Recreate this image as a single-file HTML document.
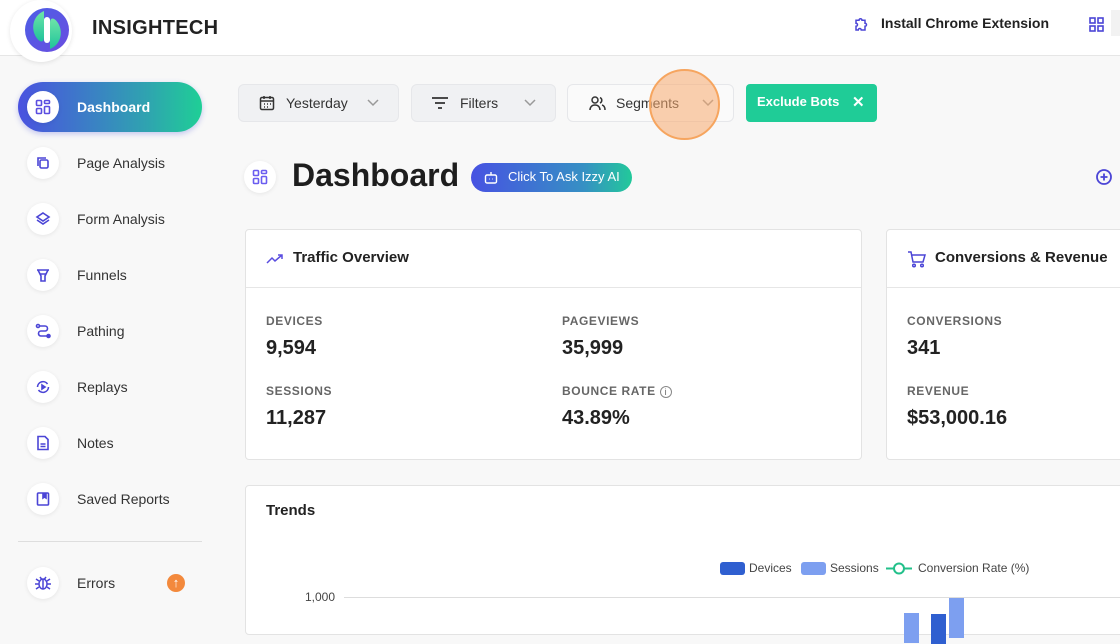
<!DOCTYPE html>
<html><head><meta charset="utf-8"><style>
*{box-sizing:border-box;margin:0;padding:0}
body{width:1120px;height:621px;overflow:hidden;background:#f8f8f8;font-family:"Liberation Sans",sans-serif;color:#222;position:relative}
.abs{position:absolute}
.hdr{left:0;top:0;width:1120px;height:56px;background:#fff;border-bottom:1px solid #e6e6e6}
.ic{position:absolute;width:32px;height:32px;border-radius:50%;background:#fff;box-shadow:0 1px 4px rgba(0,0,0,.08);display:flex;align-items:center;justify-content:center}
.nav{position:absolute;left:77px;font-size:14px;color:#333}
.btn{position:absolute;top:84px;height:38px;border-radius:6px;background:#f0f1f3;border:1px solid #e6e7ea;font-size:14px;color:#333;display:flex;align-items:center}
.chev{position:absolute;top:14px}
.card{position:absolute;background:#fff;border:1px solid #e3e3e3;border-radius:4px}
.lbl{position:absolute;font-size:12px;font-weight:bold;color:#666;letter-spacing:.6px}
.val{position:absolute;font-size:20px;font-weight:bold;color:#222}
</style></head><body>
<div class="abs hdr"></div>
<div class="abs" style="left:10px;top:0;width:62px;height:62px;border-radius:50%;background:#fff;box-shadow:0 1px 5px rgba(0,0,0,.1)"></div>
<svg class="abs" style="left:24px;top:7px" width="46" height="46" viewBox="0 0 46 46"><defs><linearGradient id="lg" x1="0" y1="0" x2="1" y2="1"><stop offset="0" stop-color="#4c5fe6"/><stop offset="1" stop-color="#6a4de0"/></linearGradient><linearGradient id="lg2" x1="0" y1="0" x2="0" y2="1"><stop offset="0" stop-color="#6ee5a8"/><stop offset="1" stop-color="#1fc39a"/></linearGradient></defs><circle cx="23" cy="23" r="22" fill="url(#lg)"/><path d="M20 4C10 8 6 20 12 30C16 36 20 36 20 30Z" fill="url(#lg2)"/><path d="M26 42C36 38 40 26 34 16C30 10 26 10 26 16Z" fill="url(#lg2)"/><rect x="20" y="10" width="6" height="26" rx="3" fill="#fff"/></svg>
<div class="abs" style="left:92px;top:17px;font-size:20px;font-weight:bold;color:#222;letter-spacing:.3px">INSIGHTECH</div>
<svg class="abs" style="left:853px;top:15px" width="18" height="18" viewBox="0 0 24 24" fill="none" stroke="#4b45d6" stroke-width="2"><path d="M4 7h4a2 2 0 1 1 4 0h4v4a2 2 0 1 1 0 4v5h-5a2 2 0 1 0-4 0H4v-5a2 2 0 1 0 0-4z"/></svg>
<div class="abs" style="left:881px;top:15px;font-size:14px;font-weight:bold;color:#222">Install Chrome Extension</div>
<svg class="abs" style="left:1089px;top:17px" width="15" height="15" viewBox="0 0 15 15" fill="none" stroke="#4b45d6" stroke-width="1.6"><rect x="1" y="1" width="5" height="5"/><rect x="9" y="1" width="5" height="5"/><rect x="1" y="9" width="5" height="5"/><rect x="9" y="9" width="5" height="5"/></svg>
<div class="abs" style="left:1111px;top:10px;width:9px;height:26px;background:#f2f2f2"></div>

<div class="abs" style="left:18px;top:82px;width:184px;height:50px;border-radius:25px;background:linear-gradient(90deg,#4a52e0,#2fa3b0 70%,#1fcf96);box-shadow:0 2px 6px rgba(70,80,220,.3)"></div>
<div class="ic" style="left:27px;top:91px"><svg width="16" height="16" viewBox="0 0 16 16" fill="none" stroke="#5a4de0" stroke-width="1.6"><rect x="1.5" y="1.5" width="5" height="5" rx="1"/><rect x="9.5" y="1.5" width="5" height="3" rx="1"/><rect x="9.5" y="7.5" width="5" height="7" rx="1"/><rect x="1.5" y="9.5" width="5" height="5" rx="1"/></svg></div>
<div class="abs" style="left:77px;top:99px;font-size:14px;font-weight:bold;color:#fff">Dashboard</div>

<div class="ic" style="left:27px;top:147px"><svg width="16" height="16" viewBox="0 0 16 16" fill="none" stroke="#4b45d6" stroke-width="1.6"><path d="M3 11V3h8"/><rect x="5" y="5" width="8" height="8" rx="1.5"/></svg></div><div class="nav" style="top:155px">Page Analysis</div>
<div class="ic" style="left:27px;top:203px"><svg width="16" height="16" viewBox="0 0 16 16" fill="none" stroke="#4b45d6" stroke-width="1.6"><path d="M8 2l6 4-6 4-6-4z"/><path d="M2 9l6 4 6-4"/></svg></div><div class="nav" style="top:211px">Form Analysis</div>
<div class="ic" style="left:27px;top:259px"><svg width="16" height="16" viewBox="0 0 16 16" fill="none" stroke="#4b45d6" stroke-width="1.6"><path d="M2 3h12M3 3l3 6v5h4V9l3-6M5 7h6"/></svg></div><div class="nav" style="top:267px">Funnels</div>
<div class="ic" style="left:27px;top:315px"><svg width="16" height="16" viewBox="0 0 16 16" fill="none" stroke="#4b45d6" stroke-width="1.6"><circle cx="3" cy="3" r="1.5"/><path d="M5 3h5a2.5 2.5 0 0 1 0 5H6a2.5 2.5 0 0 0 0 5h6"/><circle cx="13.5" cy="13" r="1.5" fill="#4b45d6"/></svg></div><div class="nav" style="top:323px">Pathing</div>
<div class="ic" style="left:27px;top:371px"><svg width="16" height="16" viewBox="0 0 16 16" fill="none" stroke="#4b45d6" stroke-width="1.6"><path d="M2.5 8a5.5 5.5 0 0 1 10-3M13.5 8a5.5 5.5 0 0 1-10 3"/><path d="M7 6l3 2-3 2z" fill="#4b45d6"/></svg></div><div class="nav" style="top:379px">Replays</div>
<div class="ic" style="left:27px;top:427px"><svg width="16" height="16" viewBox="0 0 16 16" fill="none" stroke="#4b45d6" stroke-width="1.6"><path d="M3 1.5h7l3 3v10H3z"/><path d="M5.5 9h5M5.5 11.5h5"/></svg></div><div class="nav" style="top:435px">Notes</div>
<div class="ic" style="left:27px;top:483px"><svg width="16" height="16" viewBox="0 0 16 16" fill="none" stroke="#4b45d6" stroke-width="1.6"><rect x="2.5" y="2" width="11" height="12" rx="1"/><path d="M8 2v5l1.5-1 1.5 1V2" fill="#4b45d6"/></svg></div><div class="nav" style="top:491px">Saved Reports</div>
<div class="abs" style="left:18px;top:541px;width:184px;height:1px;background:#dedede"></div>
<div class="ic" style="left:27px;top:567px"><svg width="18" height="18" viewBox="0 0 18 18" fill="none" stroke="#4b45d6" stroke-width="1.5"><ellipse cx="9" cy="10" rx="4" ry="5"/><path d="M9 5v10M1 10h4M13 10h4M2 5l3 2M16 5l-3 2M2 15l3-2M16 15l-3-2M6 3l1.5 2M12 3l-1.5 2"/></svg></div><div class="nav" style="top:575px">Errors</div>
<div class="abs" style="left:167px;top:574px;width:18px;height:18px;border-radius:50%;background:#f3893c;color:#fff;font-size:13px;font-weight:bold;text-align:center;line-height:18px">↑</div>

<div class="btn" style="left:238px;width:161px"><svg style="margin-left:20px" width="16" height="16" viewBox="0 0 16 16" fill="none" stroke="#333" stroke-width="1.5"><rect x="1.5" y="2.5" width="13" height="12" rx="1.5"/><path d="M1.5 6h13M5 1v3M11 1v3M5 9h1M8 9h1M11 9h1M5 12h1M8 12h1"/></svg><span style="margin-left:11px">Yesterday</span><svg class="chev" style="left:128px" width="12" height="8" viewBox="0 0 12 8" fill="none" stroke="#999" stroke-width="1.5"><path d="M1 1l5 5 5-5"/></svg></div>
<div class="btn" style="left:411px;width:145px"><svg style="margin-left:19px" width="18" height="14" viewBox="0 0 18 14" stroke="#333" stroke-width="1.8"><path d="M1 2h16M4 7h10M7 12h4"/></svg><span style="margin-left:11px">Filters</span><svg class="chev" style="left:112px" width="12" height="8" viewBox="0 0 12 8" fill="none" stroke="#999" stroke-width="1.5"><path d="M1 1l5 5 5-5"/></svg></div>
<div class="btn" style="left:567px;width:167px;background:#fafafa"><svg style="margin-left:21px" width="17" height="15" viewBox="0 0 17 15" fill="none" stroke="#333" stroke-width="1.5"><circle cx="6" cy="4" r="3"/><path d="M1 14c0-3 2-5 5-5s5 2 5 5M11 1.5a3 3 0 0 1 0 5.5M13 9c2 .5 3 2.5 3 5"/></svg><span style="margin-left:10px">Segments</span><svg class="chev" style="left:134px" width="12" height="8" viewBox="0 0 12 8" fill="none" stroke="#999" stroke-width="1.5"><path d="M1 1l5 5 5-5"/></svg></div>
<div class="abs" style="left:746px;top:84px;width:131px;height:38px;border-radius:4px;background:#1fcc97;color:#fff;font-size:13px;font-weight:bold"><span class="abs" style="left:11px;top:10px">Exclude Bots</span><span class="abs" style="left:106px;top:9px;font-size:15px">✕</span></div>
<div class="abs" style="left:649px;top:69px;width:71px;height:71px;border-radius:50%;background:rgba(248,170,110,.55);border:2px solid #f6a55f"></div>

<div class="ic" style="left:244px;top:161px"><svg width="16" height="16" viewBox="0 0 16 16" fill="none" stroke="#6a5cf0" stroke-width="1.6"><rect x="1.5" y="1.5" width="5" height="5" rx="1"/><rect x="9.5" y="1.5" width="5" height="3" rx="1"/><rect x="9.5" y="7.5" width="5" height="7" rx="1"/><rect x="1.5" y="9.5" width="5" height="5" rx="1"/></svg></div>
<div class="abs" style="left:292px;top:157px;font-size:32px;font-weight:bold;color:#1e1e1e">Dashboard</div>
<div class="abs" style="left:471px;top:163px;width:161px;height:29px;border-radius:15px;background:linear-gradient(90deg,#4752e2,#3690c4 70%,#22c99a);color:#fff;font-size:13px"><svg class="abs" style="left:13px;top:8px" width="14" height="13" viewBox="0 0 14 13" fill="none" stroke="#fff" stroke-width="1.4"><rect x="1.5" y="4" width="11" height="8" rx="1.5"/><path d="M7 1v3M5 8h.5M8.5 8h.5"/></svg><span class="abs" style="left:37px;top:6px">Click To Ask Izzy AI</span></div>
<svg class="abs" style="left:1095px;top:168px" width="18" height="18" viewBox="0 0 18 18" fill="none" stroke="#4b45d6" stroke-width="1.8"><circle cx="9" cy="9" r="7"/><path d="M9 5.5v7M5.5 9h7"/></svg>

<div class="card" style="left:245px;top:229px;width:617px;height:231px">
<div class="abs" style="left:0;top:57px;width:100%;height:1px;background:#e6e6e6"></div>
<svg class="abs" style="left:20px;top:23px" width="20" height="12" viewBox="0 0 20 12" fill="none" stroke="#5a4de0" stroke-width="1.5"><path d="M1 10l5-5 3 3 7-6M12 2h4v4"/></svg>
<div class="abs" style="left:47px;top:19px;font-size:15px;font-weight:bold">Traffic Overview</div>
<div class="lbl" style="left:20px;top:84px">DEVICES</div><div class="val" style="left:20px;top:107px">9,594</div>
<div class="lbl" style="left:316px;top:84px">PAGEVIEWS</div><div class="val" style="left:316px;top:107px">35,999</div>
<div class="lbl" style="left:20px;top:154px">SESSIONS</div><div class="val" style="left:20px;top:177px">11,287</div>
<div class="lbl" style="left:316px;top:154px">BOUNCE RATE <span style="font-weight:normal;border:1px solid #888;border-radius:50%;display:inline-block;width:12px;height:12px;line-height:10px;text-align:center;font-size:9px;letter-spacing:0">i</span></div><div class="val" style="left:316px;top:177px">43.89%</div>
</div>
<div class="card" style="left:886px;top:229px;width:250px;height:231px">
<div class="abs" style="left:0;top:57px;width:100%;height:1px;background:#e6e6e6"></div>
<svg class="abs" style="left:20px;top:20px" width="19" height="18" viewBox="0 0 19 18" fill="none" stroke="#4b45d6" stroke-width="1.5"><path d="M1 2h3l2 10h10l2-7H5"/><circle cx="7" cy="15.5" r="1.3"/><circle cx="15" cy="15.5" r="1.3"/></svg>
<div class="abs" style="left:48px;top:19px;font-size:15px;font-weight:bold;white-space:nowrap">Conversions &amp; Revenue</div>
<div class="lbl" style="left:20px;top:84px">CONVERSIONS</div><div class="val" style="left:20px;top:107px">341</div>
<div class="lbl" style="left:20px;top:154px">REVENUE</div><div class="val" style="left:20px;top:177px">$53,000.16</div>
</div>
<div class="card" style="left:245px;top:485px;width:890px;height:150px">
<div class="abs" style="left:20px;top:16px;font-size:15px;font-weight:bold">Trends</div>
<div class="abs" style="left:474px;top:76px;width:25px;height:13px;border-radius:3px;background:#2f5fd0"></div>
<div class="abs" style="left:503px;top:75px;font-size:12px;color:#444">Devices</div>
<div class="abs" style="left:555px;top:76px;width:25px;height:13px;border-radius:3px;background:#7d9ff0"></div>
<div class="abs" style="left:584px;top:75px;font-size:12px;color:#444">Sessions</div>
<svg class="abs" style="left:640px;top:76px" width="26" height="13"><path d="M0 6.5h26" stroke="#22c08a" stroke-width="2"/><circle cx="13" cy="6.5" r="5" fill="#fff" stroke="#22c08a" stroke-width="2"/></svg>
<div class="abs" style="left:672px;top:75px;font-size:12px;color:#444">Conversion Rate (%)</div>
<div class="abs" style="left:59px;top:104px;font-size:12px;color:#444">1,000</div>
<div class="abs" style="left:98px;top:111px;width:800px;height:1px;background:#ddd"></div>
<div class="abs" style="left:658px;top:127px;width:15px;height:30px;background:#7d9ff0"></div>
<div class="abs" style="left:685px;top:128px;width:15px;height:30px;background:#2f5fd0"></div>
<div class="abs" style="left:703px;top:112px;width:15px;height:40px;background:#7d9ff0"></div>
</div>
</body></html>
